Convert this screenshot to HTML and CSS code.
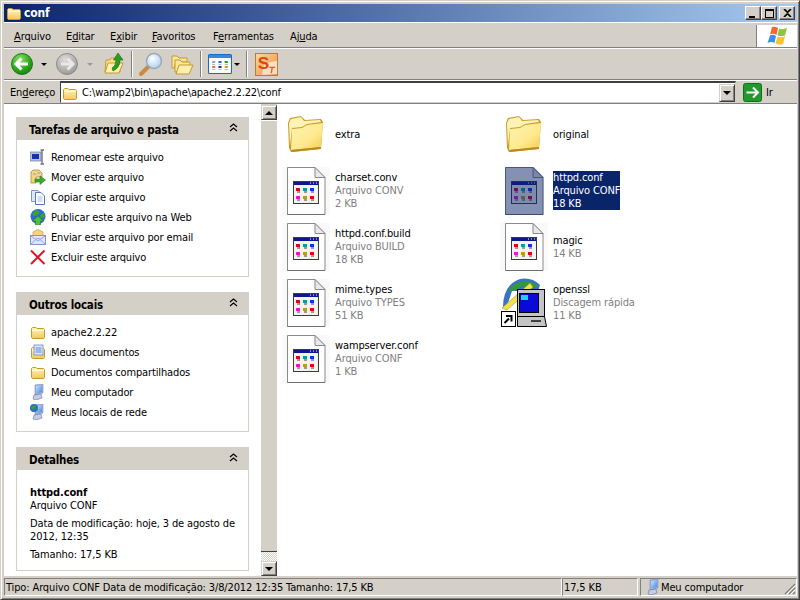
FILE: index.html
```html
<!DOCTYPE html>
<html lang="pt-BR">
<head>
<meta charset="utf-8">
<title>conf</title>
<link rel="stylesheet" href="styles.css">
</head>
<body>
<svg class="defs" xmlns="http://www.w3.org/2000/svg">
  <defs>
    <linearGradient id="fold" x1="0" y1="0" x2="0" y2="1"><stop offset="0" stop-color="#fff6c0"/><stop offset="1" stop-color="#f4c95a"/></linearGradient>
    <linearGradient id="foldBig" x1="0" y1="0" x2="1" y2="1"><stop offset="0" stop-color="#fff3b0"/><stop offset=".6" stop-color="#fee98e"/><stop offset="1" stop-color="#f7c950"/></linearGradient>
    <radialGradient id="green" cx=".4" cy=".3" r=".8"><stop offset="0" stop-color="#8fe46a"/><stop offset=".6" stop-color="#2fa51d"/><stop offset="1" stop-color="#0d7a0d"/></radialGradient>
    <radialGradient id="gray" cx=".4" cy=".3" r=".8"><stop offset="0" stop-color="#dcdcdc"/><stop offset=".7" stop-color="#aaa9a6"/><stop offset="1" stop-color="#8d8c88"/></radialGradient>
    <linearGradient id="sp" x1="0" y1="0" x2="1" y2="1"><stop offset="0" stop-color="#fdd9a8"/><stop offset="1" stop-color="#ef8a35"/></linearGradient>
    <radialGradient id="lens" cx=".4" cy=".35" r=".7"><stop offset="0" stop-color="#ffffff"/><stop offset="1" stop-color="#a7cdf2"/></radialGradient>
    <linearGradient id="screen" x1="0" y1="0" x2="1" y2="1"><stop offset="0" stop-color="#cfe6fb"/><stop offset="1" stop-color="#3f86dc"/></linearGradient>
    <symbol id="i-folder-s" viewBox="0 0 16 16">
      <path d="M1.500 13.500V4.500L2.500 3.500H6L7 4.500H13.500L14.500 5.500V13.500L13.500 14.500H2.500Z" fill="url(#fold)" stroke="#c69a2c"/>
      <path d="M2 6.500H14" stroke="#fffbe0"/>
    </symbol>
    <symbol id="i-folder-b" viewBox="0 0 38 38">
      <path d="M2 33 1 8 3 3 14 1 18 5 34 4 36 7 34 34 4 37Z" fill="#c99a26"/>
      <path d="M3 31 2 8 4 4 14 2 17 6 33 5 34 7 20 9 15 12 5 13Z" fill="#fff4b6"/>
      <path d="M5 14 15 13 20 10 36 8 34 32 4 35Z" fill="url(#foldBig)"/>
      <path d="M4 35 34 32 33 34 5 37Z" fill="#b88b20"/>
    </symbol>
    <symbol id="i-doc" viewBox="0 0 48 48">
      <path d="M5.500 .5H33L43 10.500V47.500H5.500Z" fill="#fff" stroke="#8a8a8a"/>
      <path d="M33 .5V10.500H43Z" fill="#e9e9e9" stroke="#8a8a8a"/>
      <path d="M5.500 47.500H43" stroke="#6e6e6e"/>
      <use href="#i-app"/>
    </symbol>
    <symbol id="i-app" viewBox="0 0 48 48">
      <rect x="11" y="14" width="26" height="23" fill="#3b3b3b"/>
      <rect x="12" y="15" width="24" height="21" fill="#f4f2ee"/>
      <rect x="12" y="15" width="24" height="3" fill="#0a1a8c"/>
      <path d="M28 16h1M31 16h1M34 16h1" stroke="#fff"/>
      <rect x="15" y="24" width="3" height="2" fill="#9a9a9a"/><rect x="22" y="24" width="3" height="2" fill="#9a9a9a"/><rect x="29" y="24" width="3" height="2" fill="#9a9a9a"/>
      <rect x="15" y="32" width="3" height="2" fill="#9a9a9a"/><rect x="22" y="32" width="3" height="2" fill="#9a9a9a"/><rect x="29" y="32" width="3" height="2" fill="#9a9a9a"/>
      <rect x="14" y="21" width="4" height="3" fill="#e0001e"/><rect x="21" y="21" width="4" height="3" fill="#00a0a8"/><rect x="28" y="21" width="4" height="3" fill="#1030e8"/>
      <rect x="14" y="29" width="4" height="3" fill="#f010d8"/><rect x="21" y="29" width="4" height="3" fill="#b8a000"/><rect x="28" y="29" width="4" height="3" fill="#e0001e"/>
    </symbol>
    <symbol id="i-comp" viewBox="0 0 16 16">
      <path d="M5 1 13 0V9L5 11Z" fill="#9fb2dc" stroke="#7e8cc0" stroke-width=".6"/>
      <path d="M6 2 12 1.200V8L6 9.500Z" fill="url(#screen)"/>
      <path d="M4 11 11 10 12 14 6 16 3 15Z" fill="#c6cbe6" stroke="#6a72a8" stroke-width=".6"/>
    </symbol>
  </defs>
</svg>

<div class="window">
  <header class="titlebar">
    <svg class="ico16" viewBox="0 0 16 16"><use href="#i-folder-s"/></svg>
    <span class="title">conf</span>
    <div class="winbtns">
      <button class="winbtn"><span class="g-min"></span></button>
      <button class="winbtn"><span class="g-max"></span></button>
      <button class="winbtn"><svg width="9" height="8" viewBox="0 0 9 8"><path d="M1 0 4.500 3.300 8 0M1 8 4.500 4.700 8 8" fill="none" stroke="#000" stroke-width="1.700"/></svg></button>
    </div>
  </header>

  <nav class="menubar">
    <div class="menus">
      <span class="m1"><u>A</u>rquivo</span>
      <span class="m2">E<u>d</u>itar</span>
      <span class="m3">E<u>x</u>ibir</span>
      <span class="m4"><u>F</u>avoritos</span>
      <span class="m5">F<u>e</u>rramentas</span>
      <span class="m6">Aj<u>u</u>da</span>
    </div>
    <div class="flagbox">
      <svg width="22" height="22" viewBox="0 0 22 22">
        <path d="M6 2 Q9 1 12 3 L10.500 10 Q7.500 8 4 9.500Z" fill="#ef6a2c"/>
        <path d="M13 3.500 Q16 5 21 3 L19 10.500 Q15 12 11.500 10.500Z" fill="#8cc63e"/>
        <path d="M4 10.500 Q7 9 10 11 L8.500 18 Q5 16 1.500 18Z" fill="#3a8fe8"/>
        <path d="M11.500 11.500 Q15 13 19 11.500 L17 19 Q13 20.500 9.500 18.500Z" fill="#fbc42d"/>
      </svg>
    </div>
  </nav>

  <div class="toolbar">
    <svg class="tb-round" viewBox="0 0 22 22"><circle cx="11" cy="11" r="10.500" fill="url(#green)" stroke="#1c7d14"/><path d="M17 11H6M10.500 5.500 5 11l5.500 5.500" fill="none" stroke="#fff" stroke-width="3"/></svg>
    <span class="caret tb-c1"></span>
    <svg class="tb-round tb-fwd" viewBox="0 0 22 22"><circle cx="11" cy="11" r="10.500" fill="url(#gray)" stroke="#8d8c88"/><path d="M5 11H16M11.500 5.500 17 11l-5.500 5.500" fill="none" stroke="#e8e8e8" stroke-width="3"/></svg>
    <span class="caret caret-off tb-c2"></span>
    <svg class="tb-up" width="20" height="22" viewBox="0 0 20 22">
      <path d="M1 20 2 8H6L7 6H15L16 20Z" fill="#fbe08c" stroke="#c69a2c"/>
      <path d="M1 21 4 11H19L15 21Z" fill="#fff0b0" stroke="#c69a2c"/>
      <path d="M8 16Q12 14 12 8H9.500L14 1 19 8H16Q16 16 9 19Z" fill="#2d9a22" stroke="#1a6a14" stroke-width=".6"/>
    </svg>
    <span class="tb-sep tb-s1"></span>
    <svg class="tb-search" width="25" height="25" viewBox="0 0 25 25">
      <path d="M3 22 11 14" stroke="#c98a45" stroke-width="4" stroke-linecap="round"/>
      <circle cx="16" cy="9" r="7.500" fill="url(#lens)" stroke="#9aa9b8" stroke-width="1.500"/>
    </svg>
    <svg class="tb-folders" width="23" height="21" viewBox="0 0 23 21">
      <path d="M1 14V2H6L8 4H16V8H5L3 14Z" fill="#fbe6a0" stroke="#c69a2c"/>
      <path d="M4 18V6H9L11 8H19V12H8L6 18Z" fill="#fbe6a0" stroke="#c69a2c"/>
      <path d="M5 20 8 11H22L18 20Z" fill="#fff0b0" stroke="#c69a2c"/>
    </svg>
    <span class="tb-sep tb-s2"></span>
    <svg class="tb-views" width="24" height="20" viewBox="0 0 23 20" preserveAspectRatio="none">
      <rect x=".5" y=".5" width="22" height="19" rx="1" fill="#fff" stroke="#1a66cc"/>
      <rect x="1" y="1" width="21" height="3" fill="#3a86e0"/>
      <path d="M4 7h3v2H4z" fill="#9aa0b8"/><path d="M10 7h3v2h-3z" fill="#2c6cc8"/><path d="M16 7h3v2h-3z" fill="#1e9a2e"/>
      <path d="M4 10h3v1H4zM10 10h3v1h-3zM16 10h3v1h-3z" fill="#b4b8c8"/>
      <path d="M4 12h3v2H4z" fill="#f07040"/><path d="M10 12h3v2h-3z" fill="#1a3a90"/><path d="M16 12h3v2h-3z" fill="#d0a010"/>
      <path d="M4 15h3v1H4zM10 15h3v1h-3zM16 15h3v1h-3z" fill="#b4b8c8"/>
    </svg>
    <span class="caret tb-c3"></span>
    <span class="tb-sep tb-s3"></span>
    <svg class="tb-sp" width="23" height="23" viewBox="0 0 24 24">
      <rect x=".5" y=".5" width="23" height="23" fill="url(#sp)" stroke="#b8773c"/>
      <path d="M10 11 23 8V22L7 23Z" fill="#fbeedd" opacity=".8"/>
      <text class="sp-s" x="3" y="17">S</text>
      <path d="M15 15h6M18 15l-1 6" stroke="#c96a24" stroke-width="1.400"/>
    </svg>
  </div>

  <div class="addressbar">
    <span class="addr-label">En<u>d</u>ereço</span>
    <div class="combo">
      <svg class="ico16" viewBox="0 0 16 16"><use href="#i-folder-s"/></svg>
      <span class="addr-text">C:\wamp2\bin\apache\apache2.2.22\conf</span>
      <button class="sbtn combo-btn"><span class="tri-down"></span></button>
    </div>
    <svg class="go" width="19" height="19" viewBox="0 0 19 19"><rect x=".5" y=".5" width="18" height="18" rx="2" fill="#1f9a2b" stroke="#0f6f1a"/><path d="M3.500 9.500H14M10 4.500l5 5-5 5" fill="none" stroke="#fff" stroke-width="2"/></svg>
    <span class="go-label">Ir</span>
  </div>

  <main class="main">
    <aside class="side">
      <section class="panel">
        <h2 class="panel-head"><span>Tarefas de arquivo e pasta</span><svg class="chev" width="9" height="9" viewBox="0 0 9 9"><path d="M1 4 4.500 1 8 4M1 8 4.500 5 8 8" fill="none" stroke="#000" stroke-width="1.200"/></svg></h2>
        <ul class="tasks">
          <li><svg class="ico16" viewBox="0 0 16 16"><rect x="0" y="3" width="11" height="9" fill="#b8c4dc" stroke="#5a6a90" stroke-width=".6"/><rect x="2" y="5" width="7" height="5" fill="#1230b8"/><path d="M12 1V15M10.500 1H14M10.500 15H14" stroke="#6a7488" stroke-width="1.400" fill="none"/></svg>Renomear este arquivo</li>
          <li><svg class="ico16" viewBox="0 0 16 16"><path d="M1 14V3L3 1H9L12 4V8H6V14Z" fill="#f4d480" stroke="#b08c3c" stroke-width=".8"/><path d="M7 4H10M3 5H6" stroke="#8aa0c8"/><path d="M5 10H10V7L15.500 11 10 15.500V13H5Z" fill="#3cab2c" stroke="#1f7a1a" stroke-width=".6"/></svg>Mover este arquivo</li>
          <li><svg class="ico16" viewBox="0 0 16 16"><path d="M1.500 1.500H8L10 3.500V12.500H1.500Z" fill="#dfe8f8" stroke="#7e96c8"/><path d="M5.500 3.500H11L14.500 7V15.500H5.500Z" fill="#fff" stroke="#4f78c0"/><path d="M7.500 8h5M7.500 10h5M7.500 12h5" stroke="#a4bce4"/></svg>Copiar este arquivo</li>
          <li><svg class="ico16" viewBox="0 0 16 16"><circle cx="8" cy="7.500" r="7.500" fill="#2c68d8"/><path d="M2 5 6 1 10 3 8 6 4 7ZM10 6 14 4 15 8 11 9Z" fill="#39a52c"/><path d="M8 7 13.500 12H10.500V16H5.500V12H2.500Z" fill="#4fc03a" stroke="#1e7a1a" stroke-width=".6"/></svg>Publicar este arquivo na Web</li>
          <li><svg class="ico16" viewBox="0 0 16 16"><path d="M3 7V3L8 .5 13 3V7Z" fill="#f4d480" stroke="#c49a40" stroke-width=".7"/><rect x=".5" y="6.500" width="15" height="9" fill="#dbe6f8" stroke="#7e96c8"/><path d="M1 15 7 9.500H9L15 15M1 7 8 12 15 7" fill="none" stroke="#8ea8d8"/></svg>Enviar este arquivo por email</li>
          <li><svg class="ico16" viewBox="0 0 16 16"><path d="M1 1.500 14.500 15M14.500 1.500 1 15" stroke="#d8172a" stroke-width="2"/></svg>Excluir este arquivo</li>
        </ul>
      </section>
      <section class="panel">
        <h2 class="panel-head"><span>Outros locais</span><svg class="chev" width="9" height="9" viewBox="0 0 9 9"><path d="M1 4 4.500 1 8 4M1 8 4.500 5 8 8" fill="none" stroke="#000" stroke-width="1.200"/></svg></h2>
        <ul class="tasks">
          <li><svg class="ico16" viewBox="0 0 16 16"><use href="#i-folder-s"/></svg>apache2.2.22</li>
          <li><svg class="ico16" viewBox="0 0 16 16"><use href="#i-folder-s"/><rect x="4" y="1" width="9" height="10" fill="#dfe8f8" stroke="#6a88c0" stroke-width=".8"/><path d="M5.500 4h6M5.500 6h6M5.500 8h6" stroke="#5a88d0"/></svg>Meus documentos</li>
          <li><svg class="ico16" viewBox="0 0 16 16"><use href="#i-folder-s"/></svg>Documentos compartilhados</li>
          <li><svg class="ico16" viewBox="0 0 16 16"><use href="#i-comp"/></svg>Meu computador</li>
          <li><svg class="ico16" viewBox="0 0 16 16"><use href="#i-comp"/><circle cx="4" cy="4" r="4" fill="#2c68d8"/><path d="M1 3 4 1 6 3 3 6ZM6 5l2-1-1 3Z" fill="#39a52c"/></svg>Meus locais de rede</li>
        </ul>
      </section>
      <section class="panel">
        <h2 class="panel-head"><span>Detalhes</span><svg class="chev" width="9" height="9" viewBox="0 0 9 9"><path d="M1 4 4.500 1 8 4M1 8 4.500 5 8 8" fill="none" stroke="#000" stroke-width="1.200"/></svg></h2>
        <div class="details">
          <div class="d-group"><strong>httpd.conf</strong><br>Arquivo CONF</div>
          <div class="d-group">Data de modificação: hoje, 3 de agosto de 2012, 12:35</div>
          <div class="d-group">Tamanho: 17,5 KB</div>
        </div>
      </section>
    </aside>

    <div class="scrollbar">
      <button class="sbtn sb-btn"><span class="tri-up"></span></button>
      <div class="thumb"></div>
      <div class="track"></div>
      <button class="sbtn sb-btn"><span class="tri-down"></span></button>
    </div>

    <div class="files">
      <div class="item"><svg class="big folder" width="38" height="38" viewBox="0 0 38 38"><use href="#i-folder-b"/></svg><div class="label"><div>extra</div></div></div>
      <div class="item"><svg class="big folder" width="38" height="38" viewBox="0 0 38 38"><use href="#i-folder-b"/></svg><div class="label"><div>original</div></div></div>

      <div class="item"><svg class="big doc halo" width="48" height="48" viewBox="0 0 48 48"><use href="#i-doc"/></svg><div class="label"><div>charset.conv</div><div class="sub">Arquivo CONV</div><div class="sub">2 KB</div></div></div>
      <div class="item"><svg class="big doc" width="48" height="48" viewBox="0 0 48 48"><use href="#i-doc"/><path d="M5 0H33.500L43.500 10V48H5Z" fill="#0a246a" opacity=".5"/></svg><div class="label selected"><div>httpd.conf</div><div>Arquivo CONF</div><div>18 KB</div></div></div>

      <div class="item"><svg class="big doc halo" width="48" height="48" viewBox="0 0 48 48"><use href="#i-doc"/></svg><div class="label"><div>httpd.conf.build</div><div class="sub">Arquivo BUILD</div><div class="sub">18 KB</div></div></div>
      <div class="item"><svg class="big doc halo" width="48" height="48" viewBox="0 0 48 48"><use href="#i-doc"/></svg><div class="label two"><div>magic</div><div class="sub">14 KB</div></div></div>

      <div class="item"><svg class="big doc halo" width="48" height="48" viewBox="0 0 48 48"><use href="#i-doc"/></svg><div class="label"><div>mime.types</div><div class="sub">Arquivo TYPES</div><div class="sub">51 KB</div></div></div>
      <div class="item"><svg class="big" width="48" height="50" viewBox="0 0 48 50">
        <path d="M3 30Q3 8 20 2 32 0 40 8L38 14H12L6 32Z" fill="#3a72c8"/>
        <path d="M8 14Q14 5 24 4 34 4 38 10L30 12 22 9 14 14Z" fill="#2f9a3a"/>
        <path d="M2 31 30 6 33 10 7 33Z" fill="#f4e04a" stroke="#a89a20" stroke-width=".6"/>
        <rect x="17.500" y="12.500" width="27" height="27" fill="#c4c4c4" stroke="#000"/>
        <rect x="19.500" y="16.500" width="19" height="19" fill="#0a0ad8" stroke="#000"/>
        <rect x="21" y="18" width="7" height="5" fill="#30c8f0"/>
        <path d="M17.500 39.500H44.500L46.500 49.500H17.500Z" fill="#c4c4c4" stroke="#000"/>
        <path d="M31 44H41" stroke="#404040" stroke-width="2"/>
        <rect x="1.500" y="34.500" width="14" height="15" fill="#fff" stroke="#000"/>
        <path d="M4.500 46 9 41.500M6 39H11.500V44.500" fill="none" stroke="#000" stroke-width="2"/>
      </svg><div class="label"><div>openssl</div><div class="sub">Discagem rápida</div><div class="sub">11 KB</div></div></div>

      <div class="item"><svg class="big doc halo" width="48" height="48" viewBox="0 0 48 48"><use href="#i-doc"/></svg><div class="label"><div>wampserver.conf</div><div class="sub">Arquivo CONF</div><div class="sub">1 KB</div></div></div>
    </div>
  </main>

  <footer class="statusbar">
    <div class="st st-main">Tipo: Arquivo CONF Data de modificação: 3/8/2012 12:35 Tamanho: 17,5 KB</div>
    <div class="st st-size">17,5 KB</div>
    <div class="st st-zone"><svg class="ico16" viewBox="0 0 16 16"><use href="#i-comp"/></svg>Meu computador
      <svg class="grip" width="12" height="12" viewBox="0 0 12 12"><path d="M11 1 1 11M11 5 5 11M11 9 9 11" stroke="#808080" stroke-width="1.200"/><path d="M11.500 2.500 2.500 11.500M11.500 6.500 6.500 11.500" stroke="#fff"/></svg>
    </div>
  </footer>
</div>
</body>
</html>
```

FILE: styles.css
```css
* { box-sizing: border-box; }
html, body { margin: 0; padding: 0; }
body {
  width: 800px;
  height: 600px;
  overflow: hidden;
  font-family: "DejaVu Sans Condensed", "DejaVu Sans", sans-serif;
  font-stretch: condensed;
  font-size: 11px;
  letter-spacing: -.13px;
  color: #000;
  background: #d4d0c8;
}
.defs { display: block; width: 0; height: 0; overflow: hidden; }
u { text-decoration: underline; text-underline-offset: 1px; }
ul { list-style: none; margin: 0; padding: 0; }
h2 { margin: 0; }
button { margin: 0; padding: 0; font: inherit; }
.ico16 { width: 16px; height: 16px; flex: none; display: block; }

.window {
  width: 800px;
  height: 600px;
  display: flex;
  flex-direction: column;
  padding: 3px 2px 2px 3px;
  border: 1px solid;
  border-color: #d4d0c8 #404040 #404040 #d4d0c8;
  box-shadow: inset 1px 1px #fff, inset -1px -1px #808080;
  background: #d4d0c8;
}

/* title */
.titlebar {
  height: 18px;
  flex: none;
  display: flex;
  align-items: center;
  padding: 0 2px;
  color: #fff;
  background: linear-gradient(90deg, #0a246a, #a6caf0);
}
.title { margin-left: 2px; font-size: 12px; font-weight: bold; }
.winbtns { margin-left: auto; display: flex; }
.winbtn {
  width: 16px;
  height: 14px;
  display: flex;
  align-items: center;
  justify-content: center;
  background: #d4d0c8;
  border: 1px solid;
  border-color: #fff #404040 #404040 #fff;
  box-shadow: inset -1px -1px #808080;
}
.winbtn + .winbtn:last-child { margin-left: 2px; }
.g-min { width: 6px; height: 2px; background: #000; margin: 7px 3px 0 0; }
.g-max { width: 9px; height: 9px; border: 1px solid #000; border-top-width: 2px; }

/* menu */
.menubar {
  height: 26px;
  flex: none;
  display: flex;
  padding-top: 2px;
  border-top: 1px solid #fff;
  border-bottom: 1px solid #808080;
  box-shadow: 0 1px #fff;
}
.menus { flex: 1; display: flex; align-items: center; padding: 1px 0 0 10px; border-right: 1px solid #808080; }
.m1 { width: 52px; } .m2 { width: 44px; } .m3 { width: 42px; } .m4 { width: 61px; } .m5 { width: 77px; }
.flagbox { width: 40px; background: #fff; display: flex; align-items: center; justify-content: center; }

/* toolbar */
.toolbar {
  height: 31px;
  flex: none;
  display: flex;
  align-items: center;
  padding-left: 7px;
  margin-top: 1px;
  border-bottom: 1px solid #808080;
  box-shadow: 0 1px #fff;
}
.tb-round { width: 22px; height: 22px; flex: none; }
.caret { width: 0; height: 0; flex: none; border: 3px solid transparent; border-top: 3px solid #000; border-bottom: 0; }
.caret-off { border-top-color: #9a9a9a; }
.tb-c1 { margin-left: 8px; }
.tb-fwd { margin-left: 9px; }
.tb-c2 { margin-left: 9px; }
.tb-up { margin: -2px 0 0 11px; flex: none; }
.tb-sep { width: 2px; height: 26px; flex: none; border-left: 1px solid #808080; border-right: 1px solid #fff; }
.tb-s1 { margin-left: 7px; }
.tb-search { margin-left: 5px; flex: none; }
.tb-folders { margin-left: 8px; flex: none; }
.tb-s2 { margin-left: 6px; }
.tb-views { margin-left: 6px; flex: none; }
.tb-c3 { margin-left: 2px; }
.tb-s3 { margin-left: 6px; }
.tb-sp { margin-left: 7px; flex: none; }
.sp-s { font-family: "Liberation Sans", sans-serif; font-stretch: normal; font-weight: bold; font-size: 18px; fill: #d8480f; }

/* address */
.addressbar {
  height: 23px;
  flex: none;
  display: flex;
  align-items: center;
  margin-top: 1px;
  padding-left: 6px;
  border-bottom: 1px solid #808080;
}
.addr-label { width: 50px; flex: none; }
.combo {
  width: 676px;
  height: 22px;
  flex: none;
  display: flex;
  align-items: center;
  padding-left: 1px;
  background: #fff;
  border: 1px solid;
  border-color: #404040 #d4d0c8 #d4d0c8 #404040;
  border-top-width: 2px;
}
.addr-text { margin-left: 4px; flex: 1; }
.sbtn {
  display: flex;
  align-items: center;
  justify-content: center;
  background: #d4d0c8;
  border: 1px solid;
  border-color: #d4d0c8 #404040 #404040 #d4d0c8;
  box-shadow: inset 1px 1px #fff, inset -1px -1px #808080;
  flex: none;
}
.combo-btn { width: 16px; height: 18px; }
.tri-down, .tri-up { width: 0; height: 0; border: 4px solid transparent; }
.tri-down { border-top: 4px solid #000; border-bottom: 0; }
.tri-up { border-bottom: 4px solid #000; border-top: 0; }
.go { margin-left: 7px; flex: none; }
.go-label { margin-left: 4px; }

/* main */
.main { flex: 1; min-height: 0; display: flex; background: #fff; }
.side { width: 257px; flex: none; padding: 13px 12px 0; }
.panel { width: 233px; margin-bottom: 15px; }
.panel-head {
  height: 23px;
  display: flex;
  align-items: center;
  justify-content: space-between;
  padding: 3px 11px 0 13px;
  font-size: 11.500px;
  font-weight: bold;
  letter-spacing: -.2px;
  background: #d4d0c8;
}
.chev { margin-top: -6px; }
.tasks { padding: 7px 0 9px 13px; border: 1px solid #d4d0c8; border-top: 0; }
.tasks li { height: 20px; display: flex; align-items: center; gap: 5px; }
.details { padding: 16px 8px 9px 13px; border: 1px solid #d4d0c8; border-top: 0; line-height: 13px; height: 101px; }
.d-group { margin-bottom: 5px; }
.d-group strong { font-size: 11px; }

/* scrollbar */
.scrollbar { width: 16px; flex: none; display: flex; flex-direction: column; background: #d4d0c8; padding-top: 1px; }
.sb-btn { width: 16px; height: 15px; }
.thumb { height: 432px; flex: none; background: #d4d0c8; border-top: 1px solid #fff; border-bottom: 1px solid #404040; }
.track { flex: 1; background: repeating-conic-gradient(#fff 0 25%, #d4d0c8 0 50%) 0 0 / 2px 2px; }

/* files */
.files {
  flex: 1;
  display: grid;
  grid-template-columns: 218px 218px;
  grid-auto-rows: 56px;
  padding: 2px 0 0 5px;
  align-content: start;
}
.item { display: flex; align-items: center; min-width: 0; }
.big { flex: none; display: block; }
.doc { margin-top: 2px; }
.folder { margin: 0 5px 0 5px; }
.halo { background: #f9f9f9; }
.label { margin-left: 5px; line-height: 13px; white-space: nowrap; }
.two { padding-top: 2px; }
.sub { color: #808080; }
.selected { background: #0a246a; color: #fff; }

/* status */
.statusbar { height: 21px; flex: none; display: flex; padding-top: 2px; }
.st {
  height: 18px;
  display: flex;
  align-items: center;
  border: 1px solid;
  border-color: #808080 #fff #fff #808080;
  padding-left: 1px;
}
.st-main { width: 558px; }
.st-size { width: 76px; }
.st-zone { flex: 1; margin-left: 2px; padding-left: 4px; }
.grip { margin-left: auto; align-self: flex-end; }
```
